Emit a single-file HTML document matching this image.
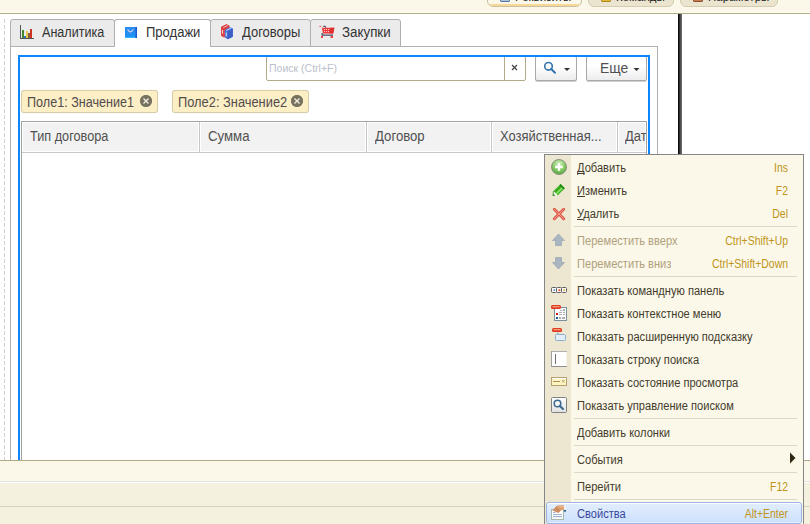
<!DOCTYPE html>
<html><head><meta charset="utf-8">
<style>
*{margin:0;padding:0;box-sizing:border-box}
html,body{width:810px;height:524px;overflow:hidden;background:#fff;font-family:"Liberation Sans",sans-serif}
.a{position:absolute}
.t{position:absolute;white-space:nowrap;font-size:13.33px;color:#333;line-height:16px}
.m{position:absolute;left:577px;white-space:nowrap;font-size:12px;line-height:23px;height:23px;margin-top:2px;transform:scaleX(0.925);transform-origin:0 0}
.k{position:absolute;left:600px;width:188px;white-space:nowrap;font-size:12px;line-height:23px;height:23px;margin-top:2px;color:#c09418;text-align:right;transform:scaleX(0.87);transform-origin:100% 0}
.m u{text-decoration:underline;text-decoration-skip-ink:none;text-underline-offset:1px}
</style></head><body>
<!-- top bar -->
<div class="a" style="left:0;top:0;width:810px;height:13px;background:#fbf8e9"></div>
<div class="a" style="left:0;top:12px;width:810px;height:1px;background:#fdfcf0"></div>
<div class="a" style="left:0;top:13px;width:810px;height:1px;background:#b4ac86"></div>
<!-- top buttons -->
<div class="a" style="left:487px;top:-12px;width:95px;height:19px;border:1px solid #c9c0a0;border-radius:0 0 6px 6px;background:#fbf8ea;overflow:hidden">
  <div class="a" style="left:0;bottom:0;width:100%;height:2px;background:#f8d898"></div>
</div>
<div class="a" style="left:588px;top:-12px;width:86px;height:19px;border:1px solid #d4ccb0;border-radius:0 0 6px 6px;background:#ebe5d0"></div>
<div class="a" style="left:680px;top:-12px;width:98px;height:19px;border:1px solid #d4ccb0;border-radius:0 0 6px 6px;background:#ebe5d0"></div>
<div class="a" style="left:500px;top:-8px;width:10px;height:10px;border:1px solid #5a78a0;border-radius:1px;background:linear-gradient(#e8f0f8,#a8c0dc)"></div>
<div class="a" style="left:601px;top:-8px;width:10px;height:10px;border:1px solid #b08820;border-radius:1px;background:linear-gradient(#fff0a0,#e0b030)"></div>
<div class="a" style="left:693px;top:-8px;width:10px;height:10px;border:1px solid #905030;border-radius:1px;background:linear-gradient(#f0c8a8,#c07850)"></div>
<div class="t" style="left:515px;top:-11px;font-size:11.5px;color:#222">Реквизиты</div>
<div class="t" style="left:616px;top:-11px;font-size:11.5px;color:#222">Команды</div>
<div class="t" style="left:708px;top:-11px;font-size:11.5px;color:#222">Параметры</div>

<!-- dashed line -->
<div class="a" style="left:4px;top:19px;width:1px;height:441px;background:repeating-linear-gradient(#d0d0d0 0 4px,transparent 4px 6px)"></div>
<!-- black bar -->
<div class="a" style="left:678px;top:14px;width:4px;height:446px;background:linear-gradient(90deg,#000 0,#1a1a1a 25%,#404040 50%,#606060 75%,#707070 100%)"></div>

<!-- tab panel -->
<div class="a" style="left:10px;top:46px;width:648px;height:420px;border:1px solid #b0b0b0;background:#fff"></div>
<!-- tabs -->
<div class="a" style="left:10px;top:19px;width:105px;height:28px;border:1px solid #b0b0b0;border-radius:3px 3px 0 0;background:#ebebeb"></div>
<div class="a" style="left:210px;top:19px;width:101px;height:28px;border:1px solid #b0b0b0;border-radius:3px 3px 0 0;background:#ebebeb"></div>
<div class="a" style="left:310px;top:19px;width:91px;height:28px;border:1px solid #b0b0b0;border-radius:3px 3px 0 0;background:#ebebeb"></div>
<div class="a" style="left:114px;top:19px;width:97px;height:27px;border:1px solid #b0b0b0;border-bottom:none;border-radius:3px 3px 0 0;background:#fff"></div>
<div class="a" style="left:115px;top:46px;width:95px;height:1px;background:#fff"></div>
<div class="t" style="left:42px;top:24px;font-size:14px;transform:scaleX(0.899);transform-origin:0 0;color:#333">Аналитика</div>
<div class="t" style="left:146px;top:24px;font-size:14px;transform:scaleX(0.93);transform-origin:0 0;color:#333">Продажи</div>
<div class="t" style="left:242px;top:24px;font-size:14px;transform:scaleX(0.927);transform-origin:0 0;color:#333">Договоры</div>
<div class="t" style="left:342px;top:24px;font-size:14px;transform:scaleX(0.953);transform-origin:0 0;color:#333">Закупки</div>

<!-- blue focus frame -->
<div class="a" style="left:18px;top:55px;width:632px;height:420px;border:2px solid #0c86ff"></div>

<!-- search input -->
<div class="a" style="left:266px;top:56px;width:260px;height:25px;border:1px solid #b4ac88;border-radius:2px;background:#fff"></div>
<div class="a" style="left:504px;top:57px;width:1px;height:23px;background:#b4ac88"></div>
<div class="a" style="left:18px;top:55px;width:632px;height:2px;background:#0c86ff"></div>
<div class="t" style="left:269px;top:60px;font-size:11.7px;transform:scaleX(0.9);transform-origin:0 0;color:#bcc0cc">Поиск (Ctrl+F)</div>
<svg class="a" style="left:511px;top:64px" width="7" height="7" viewBox="0 0 7 7"><path d="M1 1 L6 6 M6 1 L1 6" stroke="#444" stroke-width="1.2"/></svg>
<!-- search btn -->
<div class="a" style="left:535px;top:56px;width:42px;height:25px;border:1px solid #a8a8a8;border-radius:2px;background:linear-gradient(#fff 40%,#ececec);box-shadow:0 1px 0 #d0d0d0"></div>
<div class="a" style="left:18px;top:55px;width:632px;height:2px;background:#0c86ff"></div>
<!-- more btn -->
<div class="a" style="left:586px;top:56px;width:61px;height:25px;border:1px solid #a8a8a8;border-radius:2px;background:linear-gradient(#fff 40%,#ececec);box-shadow:0 1px 0 #d0d0d0"></div>
<div class="a" style="left:18px;top:55px;width:632px;height:2px;background:#0c86ff"></div>
<div class="t" style="left:600px;top:60px;font-size:14px;transform:scaleX(0.99);transform-origin:0 0;color:#505050">Еще</div>

<!-- chips -->
<div class="a" style="left:21px;top:90px;width:137px;height:23px;border:1px solid #d8cca4;border-radius:3px;background:#fcefc6;box-shadow:0 0 1px rgba(0,0,0,.12)"></div>
<div class="t" style="left:27px;top:94px;font-size:14px;transform:scaleX(0.9);transform-origin:0 0;color:#524c4c">Поле1: Значение1</div>
<div class="a" style="left:140px;top:95px;width:12px;height:12px;border-radius:50%;background:#7f7a68"></div>
<div class="a" style="left:172px;top:90px;width:137px;height:23px;border:1px solid #d8cca4;border-radius:3px;background:#fcefc6;box-shadow:0 0 1px rgba(0,0,0,.12)"></div>
<div class="t" style="left:178px;top:94px;font-size:14px;transform:scaleX(0.918);transform-origin:0 0;color:#524c4c">Поле2: Значение2</div>
<div class="a" style="left:291px;top:95px;width:12px;height:12px;border-radius:50%;background:#7f7a68"></div>

<!-- table -->
<div class="a" style="left:21px;top:121px;width:626px;height:350px;border:1px solid #a2a2a2;background:#fff"></div>
<div class="a" style="left:22px;top:122px;width:624px;height:31px;background:#c8c8c8"></div>
<div class="a" style="left:22px;top:122px;width:177px;height:30px;background:#f2f2f2;border:1px solid #fff"></div>
<div class="a" style="left:200px;top:122px;width:166px;height:30px;background:#f2f2f2;border:1px solid #fff"></div>
<div class="a" style="left:367px;top:122px;width:124px;height:30px;background:#f2f2f2;border:1px solid #fff"></div>
<div class="a" style="left:492px;top:122px;width:125px;height:30px;background:#f2f2f2;border:1px solid #fff"></div>
<div class="a" style="left:618px;top:122px;width:28px;height:30px;background:#f2f2f2;border:1px solid #fff"></div>

<div class="t" style="left:30px;top:128px;font-size:14px;transform:scaleX(0.907);transform-origin:0 0;color:#505050">Тип договора</div>
<div class="t" style="left:208px;top:128px;font-size:14px;transform:scaleX(0.944);transform-origin:0 0;color:#505050">Сумма</div>
<div class="t" style="left:375px;top:128px;font-size:14px;transform:scaleX(0.94);transform-origin:0 0;color:#505050">Договор</div>
<div class="t" style="left:500px;top:128px;font-size:14px;transform:scaleX(0.926);transform-origin:0 0;color:#505050">Хозяйственная...</div>
<div class="a" style="left:618px;top:122px;width:28px;height:30px;overflow:hidden"><div class="t" style="left:7px;top:6px;font-size:14px;transform:scaleX(0.93);transform-origin:0 0;color:#505050">Дата</div></div>


<!-- tab icons -->
<svg class="a" style="left:17px;top:22px" width="20" height="20" viewBox="0 0 20 20" shape-rendering="crispEdges">
 <rect x="3" y="3" width="1" height="14" fill="#555"/>
 <rect x="3" y="16" width="14" height="1" fill="#555"/>
 <rect x="5" y="8" width="2" height="8" fill="#3f8a2a"/>
 <rect x="7" y="14" width="2" height="2" fill="#2f78c0"/>
 <rect x="9" y="9" width="2" height="7" fill="#e8c850"/>
 <rect x="11" y="11" width="2" height="5" fill="#8a6040"/>
 <rect x="13" y="7" width="2" height="9" fill="#d03020"/>
</svg>
<svg class="a" style="left:121px;top:22px" width="20" height="20" viewBox="0 0 20 20">
 <defs><linearGradient id="bg1" x1="0" y1="0" x2="0" y2="1"><stop offset="0" stop-color="#2a8cf0"/><stop offset="0.85" stop-color="#1e90f4"/><stop offset="1" stop-color="#38c4ff"/></linearGradient></defs>
 <rect x="4" y="5" width="12" height="11" fill="url(#bg1)"/>
 <rect x="14.5" y="5" width="1.5" height="11" fill="#1a58d0"/>
 <path d="M6.6 7.2 Q9.5 12.8 12.4 7.2" stroke="#1a60c8" stroke-width="1.2" fill="none" transform="translate(0.3,0.6)"/><path d="M6.6 7.2 Q9.5 12.8 12.4 7.2" stroke="#c4d2ee" stroke-width="1.3" fill="none"/>
</svg>
<svg class="a" style="left:217px;top:22px" width="20" height="20" viewBox="0 0 20 20">
 <path d="M4 5 L9.5 2.2 L12.5 3.8 L12.5 13 L7 15.5 L4 13.8 Z" fill="#e04444"/>
 <path d="M4 5 L9.5 2.2 L12.5 3.8 L7 6.6 Z" fill="#d83838"/>
 <path d="M6.3 5.6 L10.8 3.2" stroke="#f4c4c4" stroke-width="1"/>
 <rect x="5" y="8" width="1" height="3.5" fill="#f4d0d0"/>
 <path d="M7.8 8 L12.8 5 L15.8 6.4 L15.8 14.7 L10.6 17.3 L7.8 15.4 Z" fill="#4a74dc"/>
 <path d="M10.6 9.2 L15.8 6.4 L15.8 14.7 L10.6 17.3 Z" fill="#3a5ec4"/>
 <path d="M9.4 8.6 L14 6" stroke="#d0dcf4" stroke-width="1"/>
 <rect x="8.8" y="10.5" width="1" height="3.8" fill="#d0dcf4"/>
</svg>
<svg class="a" style="left:316px;top:22px" width="22" height="20" viewBox="0 0 22 20">
 <rect x="3.4" y="3.8" width="1.8" height="1.3" fill="#f06060"/>
 <path d="M7 4.3 L9 4.3 L10 5.6" stroke="#4a4a66" stroke-width="1.1" fill="none"/>
 <path d="M5.8 5.8 L18.4 5.8 L17.2 11.6 L7 11.6 Z" fill="#f03a3a"/>
 <path d="M14.5 5.8 L18.4 5.8 L17.2 11.6 L14 11.6 Z" fill="#e03030"/>
 <g fill="#f6d0d0" shape-rendering="crispEdges"><rect x="8" y="7" width="1" height="1"/><rect x="10" y="7" width="1" height="1"/><rect x="12" y="7" width="1" height="1"/><rect x="8" y="9" width="1" height="1"/><rect x="10" y="9" width="1" height="1"/><rect x="12" y="9" width="1" height="1"/></g>
 <path d="M6.2 11 L6.2 13.2 L17 13.2" stroke="#4a4a66" stroke-width="1.3" fill="none"/>
 <rect x="5" y="14" width="2" height="2" fill="#e84444"/>
 <rect x="14.5" y="14" width="2.5" height="2" fill="#e84444"/>
</svg>
<!-- chip close -->
<svg class="a" style="left:140px;top:95px" width="12" height="12" viewBox="0 0 12 12"><circle cx="6" cy="6" r="6" fill="#77725f"/><path d="M3.5 3.5 L8.5 8.5 M8.5 3.5 L3.5 8.5" stroke="#f4f0e0" stroke-width="1.3"/></svg>
<svg class="a" style="left:291px;top:95px" width="12" height="12" viewBox="0 0 12 12"><circle cx="6" cy="6" r="6" fill="#77725f"/><path d="M3.5 3.5 L8.5 8.5 M8.5 3.5 L3.5 8.5" stroke="#f4f0e0" stroke-width="1.3"/></svg>
<!-- search btn icon -->
<svg class="a" style="left:540px;top:58px" width="34" height="20" viewBox="0 0 34 20">
 <circle cx="8.5" cy="8.3" r="3.8" stroke="#3274b0" stroke-width="1.6" fill="none"/>
 <path d="M11.2 11 L15 14.8" stroke="#3274b0" stroke-width="2" stroke-linecap="round"/>
 <path d="M24 10 L30 10 L27 13 Z" fill="#333"/>
</svg>
<svg class="a" style="left:630px;top:58px" width="14" height="20" viewBox="0 0 14 20"><path d="M3.5 10 L9.5 10 L6.5 13 Z" fill="#333"/></svg>

<!-- bottom bars -->
<div class="a" style="left:0;top:460px;width:810px;height:64px;background:#f4f1de"></div>
<div class="a" style="left:0;top:460px;width:810px;height:1px;background:#b0a886"></div>
<div class="a" style="left:0;top:461px;width:810px;height:20px;background:#fbf8ea"></div>
<div class="a" style="left:0;top:481px;width:810px;height:1px;background:#e2e2e2"></div>
<div class="a" style="left:0;top:482px;width:810px;height:1px;background:#fff"></div>
<div class="a" style="left:0;top:506px;width:810px;height:1px;background:#d8d4be"></div>

<!-- context menu -->
<div class="a" id="menu" style="left:544px;top:154px;width:260px;height:380px;border:1px solid #868686;background:#fbf8ea">
  <div class="a" style="left:0;top:0;width:26px;height:380px;background:#ede7d2"></div>
</div>
<!-- menu items -->
<div class="a" style="left:546px;top:502px;width:256px;height:22px;border:1px solid #9db5e6;border-radius:3px;background:linear-gradient(#e2eefd,#cce0fc);box-shadow:inset 0 1px 0 #fff,inset 0 -1px 0 #e4eefc"></div>
<div class="a" style="left:574px;top:226px;width:223px;height:1px;background:#ddd8c4"></div>
<div class="a" style="left:574px;top:276px;width:223px;height:1px;background:#ddd8c4"></div>
<div class="a" style="left:574px;top:418px;width:223px;height:1px;background:#ddd8c4"></div>
<div class="a" style="left:574px;top:445px;width:223px;height:1px;background:#ddd8c4"></div>
<div class="a" style="left:574px;top:472px;width:223px;height:1px;background:#ddd8c4"></div>
<div class="a" style="left:574px;top:499px;width:223px;height:1px;background:#ddd8c4"></div>
<div class="m" style="top:155px;color:#433c2c"><u>Д</u>обавить</div>
<div class="k" style="top:155px">Ins</div>
<div class="m" style="top:178px;color:#433c2c"><u>И</u>зменить</div>
<div class="k" style="top:178px">F2</div>
<div class="m" style="top:201px;color:#433c2c"><u>У</u>далить</div>
<div class="k" style="top:201px">Del</div>
<div class="m" style="top:228px;color:#b0a07c">Переместить вверх</div>
<div class="k" style="top:228px">Ctrl+Shift+Up</div>
<div class="m" style="top:251px;color:#b0a07c">Переместить вниз</div>
<div class="k" style="top:251px">Ctrl+Shift+Down</div>
<div class="m" style="top:278px;color:#433c2c">Показать командную панель</div>
<div class="m" style="top:301px;color:#433c2c">Показать контекстное меню</div>
<div class="m" style="top:324px;color:#433c2c">Показать расширенную подсказку</div>
<div class="m" style="top:347px;color:#433c2c">Показать строку поиска</div>
<div class="m" style="top:370px;color:#433c2c">Показать состояние просмотра</div>
<div class="m" style="top:393px;color:#433c2c">Показать управление поиском</div>
<div class="m" style="top:420px;color:#433c2c">Добавить колонки</div>
<div class="m" style="top:447px;color:#433c2c">События</div>
<div class="m" style="top:474px;color:#433c2c">Перейти</div>
<div class="k" style="top:474px">F12</div>
<div class="m" style="top:501px;color:#3848a0">Свойства</div>
<div class="k" style="top:501px">Alt+Enter</div>

<!-- menu icons -->
<svg class="a" style="left:548px;top:156px" width="22" height="22" viewBox="0 0 22 22">
 <defs><radialGradient id="gA" cx="0.5" cy="0.3" r="0.7"><stop offset="0" stop-color="#d8f2c8"/><stop offset="0.55" stop-color="#88cc68"/><stop offset="1" stop-color="#58a840"/></radialGradient></defs>
 <circle cx="11" cy="11" r="7.5" fill="url(#gA)" stroke="#8a9282" stroke-width="1"/>
 <path d="M11 7.2 V14.8 M7.2 11 H14.8" stroke="#fff" stroke-width="2.3"/>
</svg>
<svg class="a" style="left:548px;top:180px" width="22" height="22" viewBox="0 0 22 22">
 <path d="M12.6 4 L16.8 8.3 L9.7 15.4 L5.4 11.1 Z" fill="#48b828"/>
 <path d="M6.6 12.3 L13.8 5.2" stroke="#2a9a18" stroke-width="1"/>
 <path d="M8.2 13.9 L15.3 6.8" stroke="#98e878" stroke-width="1.3"/>
 <path d="M12.6 4 L16.8 8.3 L15.6 9.5 L11.4 5.2 Z" fill="#1e8a10"/>
 <path d="M5.4 11.1 L9.7 15.4 L5 16 Z" fill="#fafaf6"/>
 <path d="M5 16 L5.6 13.8 L7.2 15.4 Z" fill="#1a6a10"/>
 <path d="M5.4 11.1 L5 16" stroke="#2a8a18" stroke-width="0.8"/>
</svg>
<svg class="a" style="left:548px;top:203px" width="22" height="22" viewBox="0 0 22 22">
 <path d="M6.3 6.3 L15.7 15.7 M15.7 6.3 L6.3 15.7" stroke="#e0584a" stroke-width="3" stroke-linecap="round"/>
 <path d="M6.3 6.3 L15.7 15.7 M15.7 6.3 L6.3 15.7" stroke="#f49a88" stroke-width="1" stroke-linecap="round"/>
</svg>
<svg class="a" style="left:548px;top:230px" width="22" height="42" viewBox="0 0 22 42">
 <path d="M10.5 4 L16.5 10.5 L13.5 10.5 L13.5 15.5 L7.5 15.5 L7.5 10.5 L4.5 10.5 Z" fill="#a9b5c0" stroke="#9aa8b4" stroke-width="0.8" stroke-linejoin="round"/>
 <path d="M7.5 27.5 L13.5 27.5 L13.5 32.5 L16.5 32.5 L10.5 39 L4.5 32.5 L7.5 32.5 Z" fill="#a9b5c0" stroke="#9aa8b4" stroke-width="0.8" stroke-linejoin="round"/>
</svg>
<svg class="a" style="left:548px;top:282px" width="22" height="16" viewBox="0 0 22 16">
 <g fill="#f8f8fa" stroke="#606060" stroke-width="1"><rect x="3.5" y="5.5" width="5" height="5" rx="1"/><rect x="8.5" y="5.5" width="5" height="5" rx="1"/><rect x="13.5" y="5.5" width="5" height="5" rx="1"/></g>
 <rect x="5.5" y="7.3" width="1.6" height="1.6" fill="#5a90c0"/><rect x="10.5" y="7.3" width="1.8" height="1.8" fill="#e84820"/><rect x="15.5" y="7.3" width="1.6" height="1.6" fill="#d0a820"/>
</svg>
<svg class="a" style="left:548px;top:300px" width="22" height="22" viewBox="0 0 22 22">
 <rect x="6.5" y="7.5" width="12" height="13" fill="#fafcff" stroke="#7890a0" stroke-width="1"/>
 <rect x="3" y="5" width="10" height="4" rx="1.5" fill="#e03a20"/>
 <rect x="4.5" y="6" width="7" height="1.3" fill="#f0a080"/>
 <rect x="8" y="13" width="2" height="2" fill="#d02010"/>
 <rect x="8" y="17" width="2" height="2" fill="#205a90"/>
 <g fill="#b0b0b0"><rect x="11" y="12" width="3" height="1"/><rect x="15" y="12" width="2" height="1"/><rect x="11" y="14" width="3" height="1"/><rect x="15" y="14" width="2" height="1"/><rect x="11" y="17" width="2" height="2"/><rect x="14" y="17" width="3" height="2"/><rect x="15" y="9" width="2" height="2"/><rect x="12" y="10" width="2" height="1"/></g>
</svg>
<svg class="a" style="left:548px;top:324px" width="22" height="22" viewBox="0 0 22 22">
 <rect x="7.5" y="10.5" width="10" height="6" rx="1" fill="#e4eef8" stroke="#88aed0" stroke-width="1"/>
 <path d="M9.5 8.5 L11 10.5 L9.5 10.5 Z" fill="#e4eef8" stroke="#88aed0" stroke-width="0.8"/>
 <rect x="4" y="4" width="10" height="4" rx="1.5" fill="#e03a20"/>
 <rect x="5.5" y="5" width="7" height="1.3" fill="#f0a080"/>
</svg>
<svg class="a" style="left:548px;top:348px" width="22" height="22" viewBox="0 0 22 22">
 <rect x="3.5" y="3.5" width="15" height="15" fill="#fff"/>
 <rect x="3" y="3" width="16" height="1" fill="#b0b0b0"/>
 <rect x="3" y="18" width="16" height="1" fill="#909090"/>
 <rect x="3" y="3" width="1" height="16" fill="#a0a0a0"/>
 <rect x="7" y="6" width="1" height="10" fill="#707070"/>
</svg>
<svg class="a" style="left:548px;top:371px" width="22" height="22" viewBox="0 0 22 22">
 <rect x="3.5" y="6.5" width="15" height="8" fill="#fff4c0" stroke="#b8a070" stroke-width="1"/>
 <rect x="4" y="7" width="14" height="1" fill="#fff"/>
 <rect x="5" y="10" width="7" height="1" fill="#a89060"/>
 <path d="M14 9 L16.5 11.5 M16.5 9 L14 11.5" stroke="#a89060" stroke-width="0.8"/>
</svg>
<svg class="a" style="left:548px;top:394px" width="22" height="22" viewBox="0 0 22 22">
 <defs><linearGradient id="gS" x1="0" y1="0" x2="0" y2="1"><stop offset="0" stop-color="#fff"/><stop offset="1" stop-color="#e0e0e0"/></linearGradient></defs>
 <rect x="3.5" y="3.5" width="15" height="15" rx="1" fill="url(#gS)" stroke="#808080" stroke-width="1"/>
 <circle cx="9.5" cy="9.5" r="3.3" fill="none" stroke="#3a6890" stroke-width="1.5"/>
 <path d="M11.8 11.8 L15 15" stroke="#3a6890" stroke-width="2" stroke-linecap="round"/>
</svg>
<svg class="a" style="left:784px;top:447px" width="16" height="23" viewBox="0 0 16 23"><path d="M6 5.5 L11.5 11 L6 16.5 Z" fill="#2e2612"/></svg>
<svg class="a" style="left:548px;top:502px" width="22" height="22" viewBox="0 0 22 22">
 <defs><pattern id="chk" width="1.4" height="1.4" patternUnits="userSpaceOnUse" patternTransform="rotate(45)"><rect width="0.7" height="0.7" fill="#9a5830"/></pattern></defs>
 <rect x="3.5" y="7.5" width="12" height="10" fill="#fdfdfd" stroke="#a8b8ac" stroke-width="1"/>
 <g fill="#9fb4d0"><rect x="5" y="12" width="9" height="1"/><rect x="5" y="14" width="9" height="1.2"/><rect x="5" y="10" width="2.5" height="1"/></g>
 <path d="M4.5 8.5 L8.5 4 L12 3 L16 3.5 L16.5 7.5 L13 8.5 L10.5 11 Z" fill="#e0a070"/>
 <path d="M4.5 8.5 L8.5 4 L12.5 8 L10.5 11 Z" fill="url(#chk)"/>
 <path d="M9 3.6 L12 3 L16 3.5 L16.3 5.5 L12 5.5 Z" fill="#eab48c"/>
 <rect x="16" y="4" width="1.6" height="4.5" fill="#f0f4f8"/>
 <rect x="15.8" y="8" width="2.2" height="1.6" fill="#2a5a80"/>
</svg>

</body></html>
